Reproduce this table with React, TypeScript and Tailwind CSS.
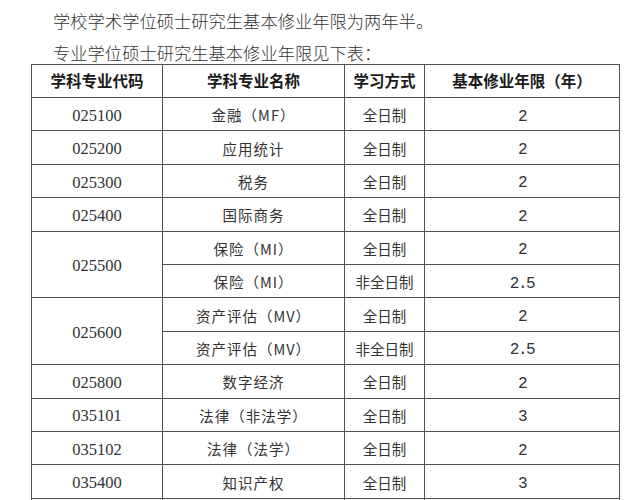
import React from 'react';

const rows: { code?: string; span?: number; name: string; mode: string; years: string }[] = [
  { code: '025100', name: '金融（MF）', mode: '全日制', years: '2' },
  { code: '025200', name: '应用统计', mode: '全日制', years: '2' },
  { code: '025300', name: '税务', mode: '全日制', years: '2' },
  { code: '025400', name: '国际商务', mode: '全日制', years: '2' },
  { code: '025500', span: 2, name: '保险（MI）', mode: '全日制', years: '2' },
  { name: '保险（MI）', mode: '非全日制', years: '2.5' },
  { code: '025600', span: 2, name: '资产评估（MV）', mode: '全日制', years: '2' },
  { name: '资产评估（MV）', mode: '非全日制', years: '2.5' },
  { code: '025800', name: '数字经济', mode: '全日制', years: '2' },
  { code: '035101', name: '法律（非法学）', mode: '全日制', years: '3' },
  { code: '035102', name: '法律（法学）', mode: '全日制', years: '2' },
  { code: '035400', name: '知识产权', mode: '全日制', years: '3' },
  { code: '', name: '', mode: '', years: '' },
];

const cjk = "font-['Noto_Sans_CJK_SC',sans-serif]";
const serif = "font-['Liberation_Serif','Noto_Sans_CJK_SC',serif] text-[16.5px] pt-[4px]";
const mono = "font-['Liberation_Mono','Noto_Sans_CJK_SC',monospace] tracking-[-1.5px] text-[16px] pt-[5px]";
const cell = 'border border-[#505050] text-center align-middle p-0';

export default function App() {
  return (
    <div className="w-[632px] h-[500px] overflow-hidden bg-white text-[#2a2a2a]">
      <div className={`${cjk} pl-[53px] pt-[5px] text-[17.3px] leading-[32px] font-light text-[#333]`}>
        <p>学校学术学位硕士研究生基本修业年限为两年半。</p>
        <p>专业学位硕士研究生基本修业年限见下表：</p>
      </div>
      <table className="ml-[31px] mt-[-5px] border-collapse table-fixed w-[588px]">
        <colgroup>
          <col className="w-[131px]" />
          <col className="w-[182px]" />
          <col className="w-[80px]" />
          <col className="w-[195px]" />
        </colgroup>
        <thead>
          <tr className={`h-[33px] ${cjk} text-[15.5px] font-bold text-[#1a1a1a]`}>
            <th className={cell}>学科专业代码</th>
            <th className={cell}>学科专业名称</th>
            <th className={cell}>学习方式</th>
            <th className={cell}>基本修业年限（年）</th>
          </tr>
        </thead>
        <tbody className={`${cjk} text-[14.5px] text-[#333]`}>
          {rows.map((r, i) => (
            <tr key={i} className="h-[33.4px]">
              {r.code !== undefined && (
                <td rowSpan={r.span || 1} className={`${cell} ${serif}`}>
                  {r.code}
                </td>
              )}
              <td className={`${cell} pt-[2px]`}>
                <span className="tracking-[1px]">{r.name}</span>
              </td>
              <td className={`${cell} pt-[2px]`}>{r.mode}</td>
              <td className={`${cell} ${mono}`}>{r.years}</td>
            </tr>
          ))}
        </tbody>
      </table>
    </div>
  );
}
